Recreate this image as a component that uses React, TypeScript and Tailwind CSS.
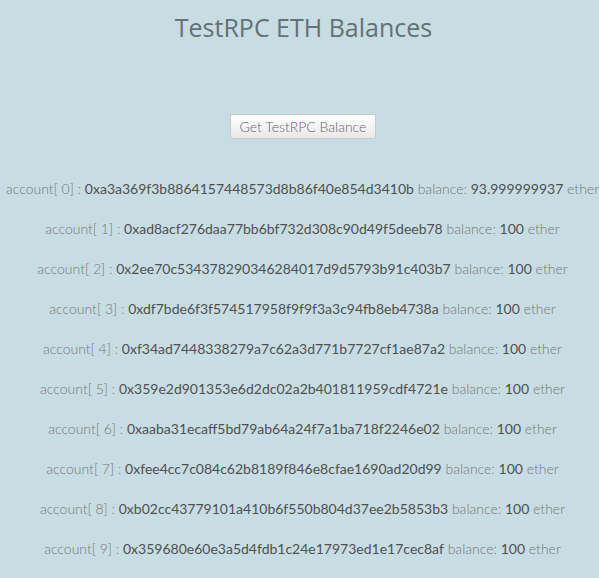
const accounts = [
  { addr: "0xa3a369f3b8864157448573d8b86f40e854d3410b", bal: "93.999999937" },
  { addr: "0xad8acf276daa77bb6bf732d308c90d49f5deeb78", bal: "100" },
  { addr: "0x2ee70c534378290346284017d9d5793b91c403b7", bal: "100" },
  { addr: "0xdf7bde6f3f574517958f9f9f3a3c94fb8eb4738a", bal: "100" },
  { addr: "0xf34ad7448338279a7c62a3d771b7727cf1ae87a2", bal: "100" },
  { addr: "0x359e2d901353e6d2dc02a2b401811959cdf4721e", bal: "100" },
  { addr: "0xaaba31ecaff5bd79ab64a24f7a1ba718f2246e02", bal: "100" },
  { addr: "0xfee4cc7c084c62b8189f846e8cfae1690ad20d99", bal: "100" },
  { addr: "0xb02cc43779101a410b6f550b804d37ee2b5853b3", bal: "100" },
  { addr: "0x359680e60e3a5d4fdb1c24e17973ed1e17cec8af", bal: "100" },
];

export default function App() {
  return (
    <div className="min-h-[578px] bg-[#c7dde3] text-center font-['Lato',sans-serif]">
      <h1 className="pt-[9px] text-[25px] leading-[36px] text-[#667075] font-['Open_Sans',sans-serif] ml-[8px]">
        TestRPC ETH Balances
      </h1>

      <div className="mt-[69px]">
        <button className="h-[25px] w-[146px] border border-[#c9c9c9] rounded-[2px] bg-gradient-to-b from-white to-[#e8e8e8] text-[14px] font-light text-[#666] ml-[7px]">
          Get TestRPC Balance
        </button>
      </div>

      <div className="mt-[40px] ml-[6px] flex flex-col gap-[20px] text-[14px] leading-[20px]">
        {accounts.map((a, i) => (
          <p key={i} className="whitespace-nowrap">
            <span className="font-light text-[#777]">account[ {i}] : </span>
            <span className="text-[#505050]">{a.addr}</span>
            <span className="font-light text-[#777]"> balance: </span>
            <span className="text-[#505050]">{a.bal}</span>
            <span className="font-light text-[#777]"> ether</span>
          </p>
        ))}
      </div>
    </div>
  );
}
